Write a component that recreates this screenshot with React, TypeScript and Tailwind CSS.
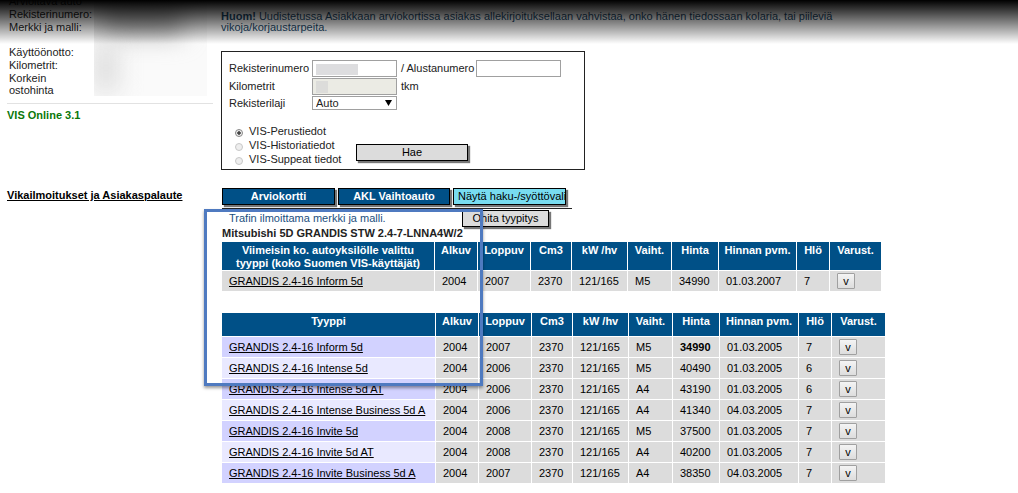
const blue = "bg-[#005087]";

const columns = ["Alkuv", "Loppuv", "Cm3", "kW /hv", "Vaiht.", "Hinta", "Hinnan pvm.", "Hlö", "Varust."];

type Row = { name: string; values: string[]; boldPrice?: boolean };

const latest: Row[] = [
    { name: "GRANDIS 2.4-16 Inform 5d", values: ["2004", "2007", "2370", "121/165", "M5", "34990", "01.03.2007", "7"] },
];

const types: Row[] = [
    { name: "GRANDIS 2.4-16 Inform 5d", values: ["2004", "2007", "2370", "121/165", "M5", "34990", "01.03.2005", "7"], boldPrice: true },
    { name: "GRANDIS 2.4-16 Intense 5d", values: ["2004", "2006", "2370", "121/165", "M5", "40490", "01.03.2005", "6"] },
    { name: "GRANDIS 2.4-16 Intense 5d AT", values: ["2004", "2006", "2370", "121/165", "A4", "43190", "01.03.2005", "6"] },
    { name: "GRANDIS 2.4-16 Intense Business 5d A", values: ["2004", "2006", "2370", "121/165", "A4", "41340", "04.03.2005", "7"] },
    { name: "GRANDIS 2.4-16 Invite 5d", values: ["2004", "2008", "2370", "121/165", "M5", "37500", "01.03.2005", "7"] },
    { name: "GRANDIS 2.4-16 Invite 5d AT", values: ["2004", "2008", "2370", "121/165", "A4", "40200", "01.03.2005", "7"] },
    { name: "GRANDIS 2.4-16 Invite Business 5d A", values: ["2004", "2007", "2370", "121/165", "A4", "38350", "04.03.2005", "7"] },
];

const latestWidths = ["w-[43px]", "w-[53px]", "w-[41px]", "w-[56px]", "w-[44px]", "w-[47px]", "w-[78px]", "w-[33px]", "w-[51px]"];
const typeWidths = ["w-[43px]", "w-[53px]", "w-[41px]", "w-[56px]", "w-[44px]", "w-[47px]", "w-[79px]", "w-[33px]", "w-[53px]"];

function VehicleTable({ title, rows, tinted }: { title: React.ReactNode; rows: Row[]; tinted?: boolean }) {
    return (
        <table className={`table-fixed border-separate border-spacing-0 ${tinted ? "w-[663px]" : "w-[659px]"}`}>
            <colgroup>
                <col />
                {(tinted ? typeWidths : latestWidths).map((w, i) => (
                    <col key={i} className={w} />
                ))}
            </colgroup>
            <thead>
                <tr className={`text-white align-top ${tinted ? "h-6" : "h-7"}`}>
                    <th className={`${blue} border-r border-b border-white pt-[2px] px-0 leading-[13px] text-center`}>{title}</th>
                    {columns.map((c) => (
                        <th key={c} className={`${blue} border-r border-b border-white last:border-r-0 pt-[2px] leading-[13px] text-center whitespace-nowrap`}>
                            {c}
                        </th>
                    ))}
                </tr>
            </thead>
            <tbody>
                {rows.map((row, r) => (
                    <tr key={row.name} className="h-[21px]">
                        <td
                            className={`border-r border-b border-white pl-[7px] whitespace-nowrap ${
                                !tinted ? "bg-[#dcdcdc]" : r % 2 ? "bg-[#e9e9ff]" : "bg-[#d2d2ff]"
                            }`}
                        >
                            <a href="#" className="underline underline-offset-1">
                                {row.name}
                            </a>
                        </td>
                        {row.values.map((v, i) => (
                            <td
                                key={i}
                                className={`bg-[#dcdcdc] border-r border-b border-white ${i === 1 ? "pl-[7px]" : "pl-[7px]"} ${
                                    i === 5 && row.boldPrice ? "font-bold" : ""
                                }`}
                            >
                                {v}
                            </td>
                        ))}
                        <td className="bg-[#dcdcdc] border-b border-white pl-[7px]">
                            <button
                                type="button"
                                className="block w-[18px] h-4 border border-[#a0a0a0] rounded-[1px] bg-gradient-to-b from-[#f4f4f4] to-[#dddddd] leading-[15px] text-center"
                            >
                                v
                            </button>
                        </td>
                    </tr>
                ))}
            </tbody>
        </table>
    );
}

function Sidebar() {
    return (
        <aside className="w-[213px] shrink-0 pl-[7px] text-[#222]">
            <div className="flex border-b border-[#e2e2e2] h-[104px]">
                <dl className="w-[87px] pl-[2px] leading-[13px]">
                    <dt className="-mt-[5px] whitespace-nowrap">Arvioitava auto</dt>
                    <dt>Rekisterinumero:</dt>
                    <dt>Merkki ja malli:</dt>
                    <dt className="mt-3">Käyttöönotto:</dt>
                    <dt>Kilometrit:</dt>
                    <dt className="leading-3">
                        Korkein
                        <br />
                        ostohinta
                    </dt>
                </dl>
                {/* customer details are masked */}
                <div className="w-[113px] h-24 bg-[#fafafa] overflow-hidden">
                    <div className="w-20 h-9 ml-2 bg-[#b4b4b4] blur-md" />
                    <div className="w-6 h-12 mt-2 bg-[#dcdcdc] blur-md" />
                </div>
            </div>
            <p className="mt-[5px] font-bold leading-[13px] text-[#0a780a]">VIS Online 3.1</p>
            <a href="#" className="block mt-[67px] font-bold leading-[13px] underline whitespace-nowrap text-black">
                Vikailmoitukset ja Asiakaspalaute
            </a>
        </aside>
    );
}

function SearchForm() {
    return (
        <form className="w-[364px] h-[119px] mt-[18px] border border-[#222] pt-[7px] pl-[7px] text-[#222]">
            <div className="flex items-center h-[18px]">
                <label htmlFor="reg" className="w-[83px]">Rekisterinumero</label>
                <div className="relative">
                    <input id="reg" type="text" className="block w-[85px] h-[17px] border border-[#a0a0a0] bg-white" />
                    <span className="absolute left-1 top-1 w-[42px] h-[11px] bg-[#dddddf]" />
                </div>
                <label htmlFor="chassis" className="ml-1 mr-[2px]">/ Alustanumero</label>
                <input id="chassis" type="text" className="block w-[85px] h-[17px] border border-[#a0a0a0] bg-white" />
            </div>
            <div className="flex items-center h-[18px]">
                <label htmlFor="km" className="w-[83px]">Kilometrit</label>
                <div className="relative">
                    <input id="km" type="text" className="block w-[85px] h-[17px] border border-[#a0a0a0] bg-[#ebebe4]" />
                    <span className="absolute left-1 top-[3px] w-3 h-3 bg-[#dcdcda]" />
                </div>
                <span className="ml-1">tkm</span>
            </div>
            <div className="flex items-center h-4">
                <label htmlFor="kind" className="w-[83px]">Rekisterilaji</label>
                <div className="relative">
                    <select id="kind" className="block w-[85px] h-[14px] appearance-none border border-[#a0a0a0] bg-white pl-[3px] leading-3">
                        <option>Auto</option>
                    </select>
                    <svg viewBox="0 0 7 6" className="absolute right-[5px] top-1 w-[7px] h-[6px] pointer-events-none">
                        <path d="M0 0h7L3.500 6z" fill="#000" />
                    </svg>
                </div>
            </div>
            <div className="flex mt-[13px]">
                <div className="w-[127px] pl-[6px]">
                    {["VIS-Perustiedot", "VIS-Historiatiedot", "VIS-Suppeat tiedot"].map((label, i) => (
                        <label key={label} className="flex items-center gap-[6px] h-[14px] whitespace-nowrap">
                            <input
                                type="radio"
                                name="scope"
                                defaultChecked={i === 0}
                                className="appearance-none w-2 h-2 mt-1 rounded-full border border-[#c8c8c8] bg-[#eeeeee] checked:border-[#888] checked:bg-[radial-gradient(#444_35%,#eee_45%)]"
                            />
                            {label}
                        </label>
                    ))}
                </div>
                <button
                    type="button"
                    className="mt-5 w-[112px] h-[17px] border border-black bg-[#dcdcdc] text-black leading-[15px] shadow-[2px_2px_1px_#777]"
                >
                    Hae
                </button>
            </div>
        </form>
    );
}

export default function App() {
    return (
        <div className="relative flex overflow-hidden bg-white text-[11px] leading-[13px] text-black font-['Liberation_Sans',Arial,sans-serif]">
            <Sidebar />
            <main className="flex-1 min-w-0 pl-2 pb-2">
                <p className="max-w-[640px] pt-[11px] leading-[11px] text-[#1c4a6b]">
                    <b>Huom!</b> Uudistetussa Asiakkaan arviokortissa asiakas allekirjoituksellaan vahvistaa, onko hänen tiedossaan
                    kolaria, tai piileviä vikoja/korjaustarpeita.
                </p>
                <SearchForm />
                <section className="pl-px">
                    <div className="flex gap-[3px] w-[350px] mt-[18px] pb-[3px] border-b border-[#222]">
                        <button type="button" className={`${blue} w-[113px] h-[17px] shrink-0 border border-black text-white font-bold shadow-[2px_2px_1px_#777]`}>
                            Arviokortti
                        </button>
                        <button type="button" className={`${blue} w-[112px] h-[17px] shrink-0 border border-black text-white font-bold shadow-[2px_2px_1px_#777]`}>
                            AKL Vaihtoauto
                        </button>
                        <button type="button" className="w-[113px] h-[17px] shrink-0 overflow-hidden border border-black bg-[#78dcf0] pl-1 text-left whitespace-nowrap shadow-[2px_2px_1px_#777]">
                            Näytä haku-/syöttövali
                        </button>
                    </div>
                    <div className="flex items-start">
                        <p className="w-60 pt-[3px] pl-[7px] text-[#1c5080]">Trafin ilmoittama merkki ja malli.</p>
                        <button type="button" className="w-[87px] h-[17px] mt-px border border-black bg-[#dcdcdc] leading-[15px] shadow-[2px_2px_1px_#777]">
                            Ohita tyypitys
                        </button>
                    </div>
                    <h2 className="font-bold text-[#222] mb-[2px]">Mitsubishi 5D GRANDIS STW 2.4-7-LNNA4W/2</h2>
                    <VehicleTable
                        title={
                            <>
                                Viimeisin ko. autoyksilölle valittu
                                <br />
                                tyyppi (koko Suomen VIS-käyttäjät)
                            </>
                        }
                        rows={latest}
                    />
                    <div className="mt-[21px]">
                        <VehicleTable title="Tyyppi" rows={types} tinted />
                    </div>
                </section>
            </main>

            {/* fade at the top edge */}
            <div className="absolute inset-x-0 top-0 h-[44px] pointer-events-none bg-gradient-to-b from-black to-transparent" />
            {/* highlight frame */}
            <div className="absolute left-[204px] top-[209px] w-[279px] h-[177px] border-3 border-[#4f7ac0] pointer-events-none shadow-[0_2px_3px_#0006]" />
        </div>
    );
}
